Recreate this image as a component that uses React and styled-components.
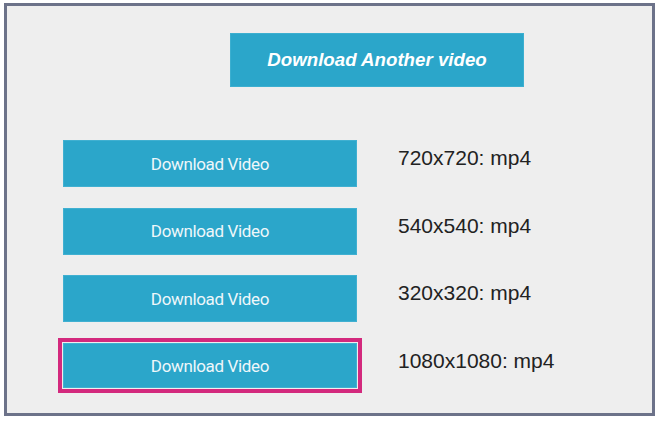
import React from "react";
import styled, { createGlobalStyle } from "styled-components";

const Global = createGlobalStyle`
  html, body { margin: 0; padding: 0; background: #ffffff; }
  body { font-family: "Liberation Sans", Arial, sans-serif; }
`;

const Frame = styled.div`
  box-sizing: border-box;
  width: 651px;
  height: 413px;
  margin: 3px 0 0 4px;
  border: 3px solid #6c7289;
  background: #eeeeee;
  padding: 27px 0 0 56px;
  display: flex;
  flex-direction: column;
`;

const AnotherButton = styled.button`
  box-sizing: border-box;
  width: 294px;
  height: 54px;
  margin: 0 0 53px 167px;
  border: 1px solid #3cafd0;
  background: #2ba6ca;
  color: #ffffff;
  font-family: "Liberation Sans", Arial, sans-serif;
  font-weight: bold;
  font-style: italic;
  font-size: 18.7px;
  padding: 0;
  cursor: pointer;
`;

const List = styled.div`
  display: flex;
  flex-direction: column;
  gap: 20.7px;
`;

const Row = styled.div`
  display: flex;
  align-items: flex-start;
  gap: 41px;
  height: 47px;
`;

const VideoButton = styled.button`
  box-sizing: border-box;
  width: 294px;
  height: ${(p) => (p.$highlight ? "45px" : "47px")};
  border: 1px solid #40b0d1;
  background: #2ba6ca;
  color: #eef7fa;
  font-family: Roboto, "Liberation Sans", sans-serif;
  font-size: 17px;
  letter-spacing: -0.35px;
  padding: 0;
  cursor: pointer;
  outline: ${(p) => (p.$highlight ? "4px solid #d3297d" : "none")};
  outline-offset: 1.5px;
`;

const Label = styled.span`
  font-family: "Liberation Sans", Arial, sans-serif;
  font-size: 21px;
  line-height: 24px;
  color: #222222;
  padding-top: 6px;
`;

const formats = [
  { res: "720x720", ext: "mp4" },
  { res: "540x540", ext: "mp4" },
  { res: "320x320", ext: "mp4" },
  { res: "1080x1080", ext: "mp4", highlight: true },
];

export default function App() {
  return (
    <>
      <Global />
      <Frame>
        <AnotherButton>Download Another video</AnotherButton>
        <List>
          {formats.map((f) => (
            <Row key={f.res}>
              <VideoButton $highlight={f.highlight}>Download Video</VideoButton>
              <Label>
                {f.res}: {f.ext}
              </Label>
            </Row>
          ))}
        </List>
      </Frame>
    </>
  );
}
